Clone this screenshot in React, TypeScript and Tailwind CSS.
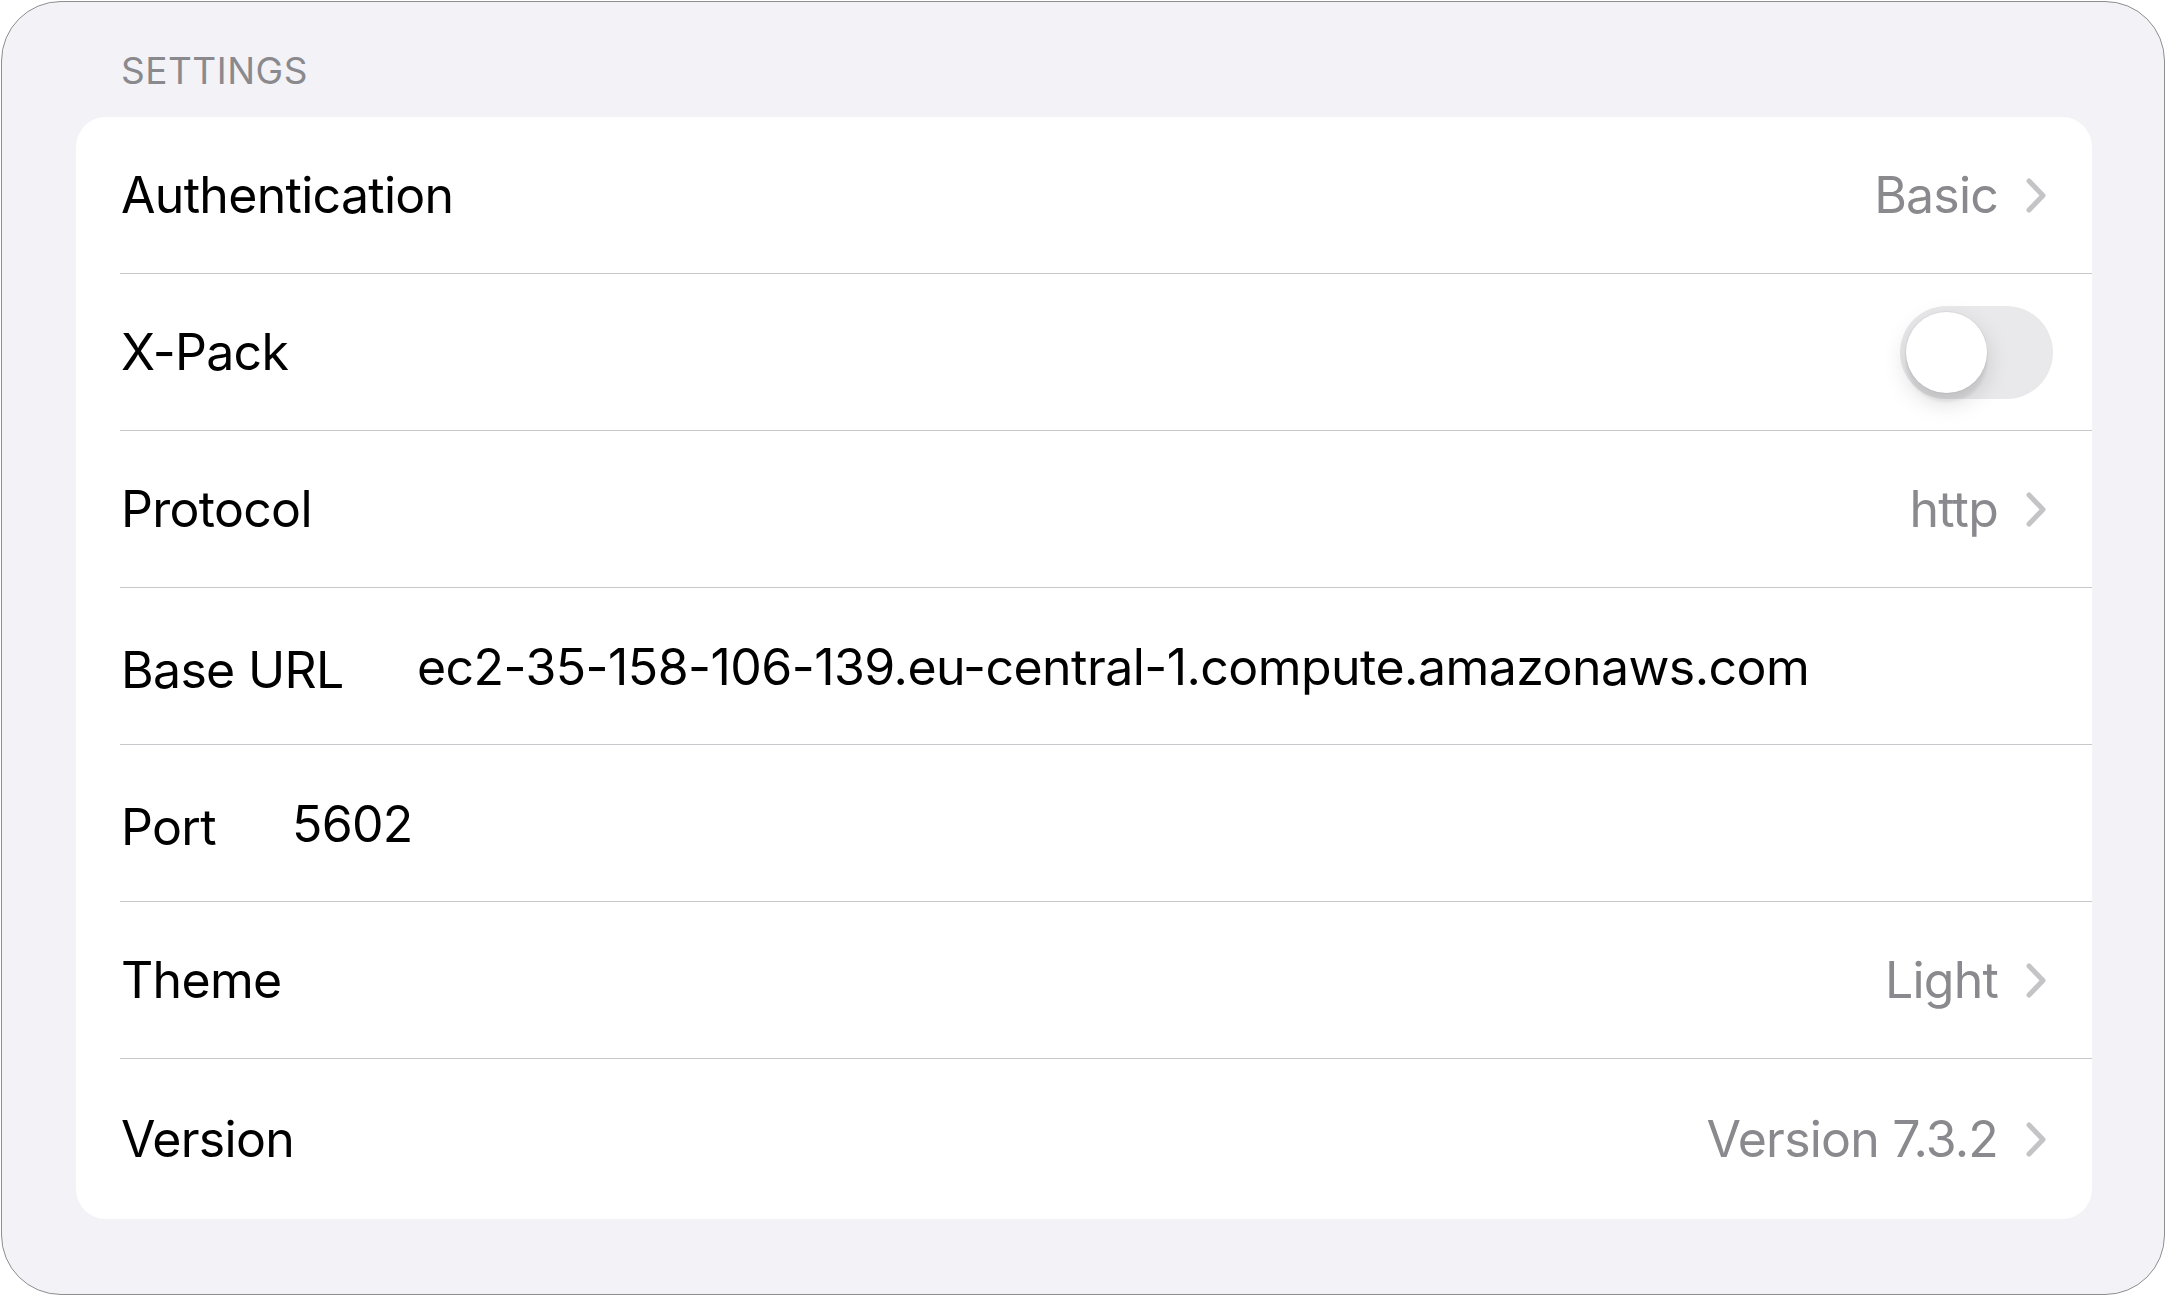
import React from "react";

const font = { fontFamily: "Inter, 'Noto Sans', sans-serif" };

function Chevron() {
  return (
    <svg width="22" height="37" viewBox="0 0 22 37" className="shrink-0">
      <path d="M4 4 L18 18.5 L4 33" fill="none" stroke="#c4c4c7" strokeWidth="5" strokeLinecap="round" strokeLinejoin="round" />
    </svg>
  );
}

function Toggle() {
  return (
    <div className="relative w-[153px] h-[93px] rounded-full bg-[#e9e9eb] mr-[-6px] shrink-0">
      <div className="absolute left-[6px] top-[6px] w-[81px] h-[81px] rounded-full bg-white shadow-[0_9px_24px_rgba(0,0,0,0.15),0_9px_3px_rgba(0,0,0,0.06),0_0_0_1px_rgba(0,0,0,0.04)]" />
    </div>
  );
}

function Row({ children, last }: { children: React.ReactNode; last?: boolean }) {
  return (
    <div className={"relative flex items-center pl-[45px] pr-[45px] " + (last ? "h-[160px]" : "h-[157px]")}>
      {children}
      {!last && <div className="absolute left-[44px] right-0 bottom-0 h-[1.5px] bg-[#c8c7cc]" />}
    </div>
  );
}

function NavRow({ label, value, last }: { label: string; value: string; last?: boolean }) {
  return (
    <Row last={last}>
      <span className="text-[50px] tracking-[-0.7px] text-black flex-1">{label}</span>
      <span className="text-[50px] tracking-[-0.8px] text-[#8a8a8e] mr-[27px]">{value}</span>
      <Chevron />
    </Row>
  );
}

export default function App() {
  return (
    <div className="w-[2166px] h-[1296px] bg-white p-[1px]" style={font}>
      <div className="w-[2164px] h-[1294px] rounded-[60px] border-[1.5px] border-[#8e8e90] bg-[#f2f2f7] overflow-hidden">
        <div className="pl-[119px] pt-[45px] text-[37px] leading-[47px] text-[#8a8a8e] uppercase tracking-[0.5px]">
          Settings
        </div>
        <div className="mt-[23px] ml-[74px] w-[2016px] rounded-[30px] bg-white overflow-hidden">
          <NavRow label="Authentication" value="Basic" />
          <Row>
            <span className="text-[50px] tracking-[-0.7px] text-black flex-1">X-Pack</span>
            <Toggle />
          </Row>
          <NavRow label="Protocol" value="http" />
          <Row>
            <span className="text-[50px] tracking-[-0.7px] text-black mt-[8px] w-[296px] shrink-0">Base URL</span>
            <span className="text-[50px] tracking-[-0.55px] text-black mt-[1px]">ec2-35-158-106-139.eu-central-1.compute.amazonaws.com</span>
          </Row>
          <Row>
            <span className="text-[50px] tracking-[-0.7px] text-black mt-[8px] w-[171px] shrink-0">Port</span>
            <span className="text-[50px] tracking-[-0.7px] text-black mt-[1px]">5602</span>
          </Row>
          <NavRow label="Theme" value="Light" />
          <NavRow label="Version" value="Version 7.3.2" last />
        </div>
      </div>
    </div>
  );
}
